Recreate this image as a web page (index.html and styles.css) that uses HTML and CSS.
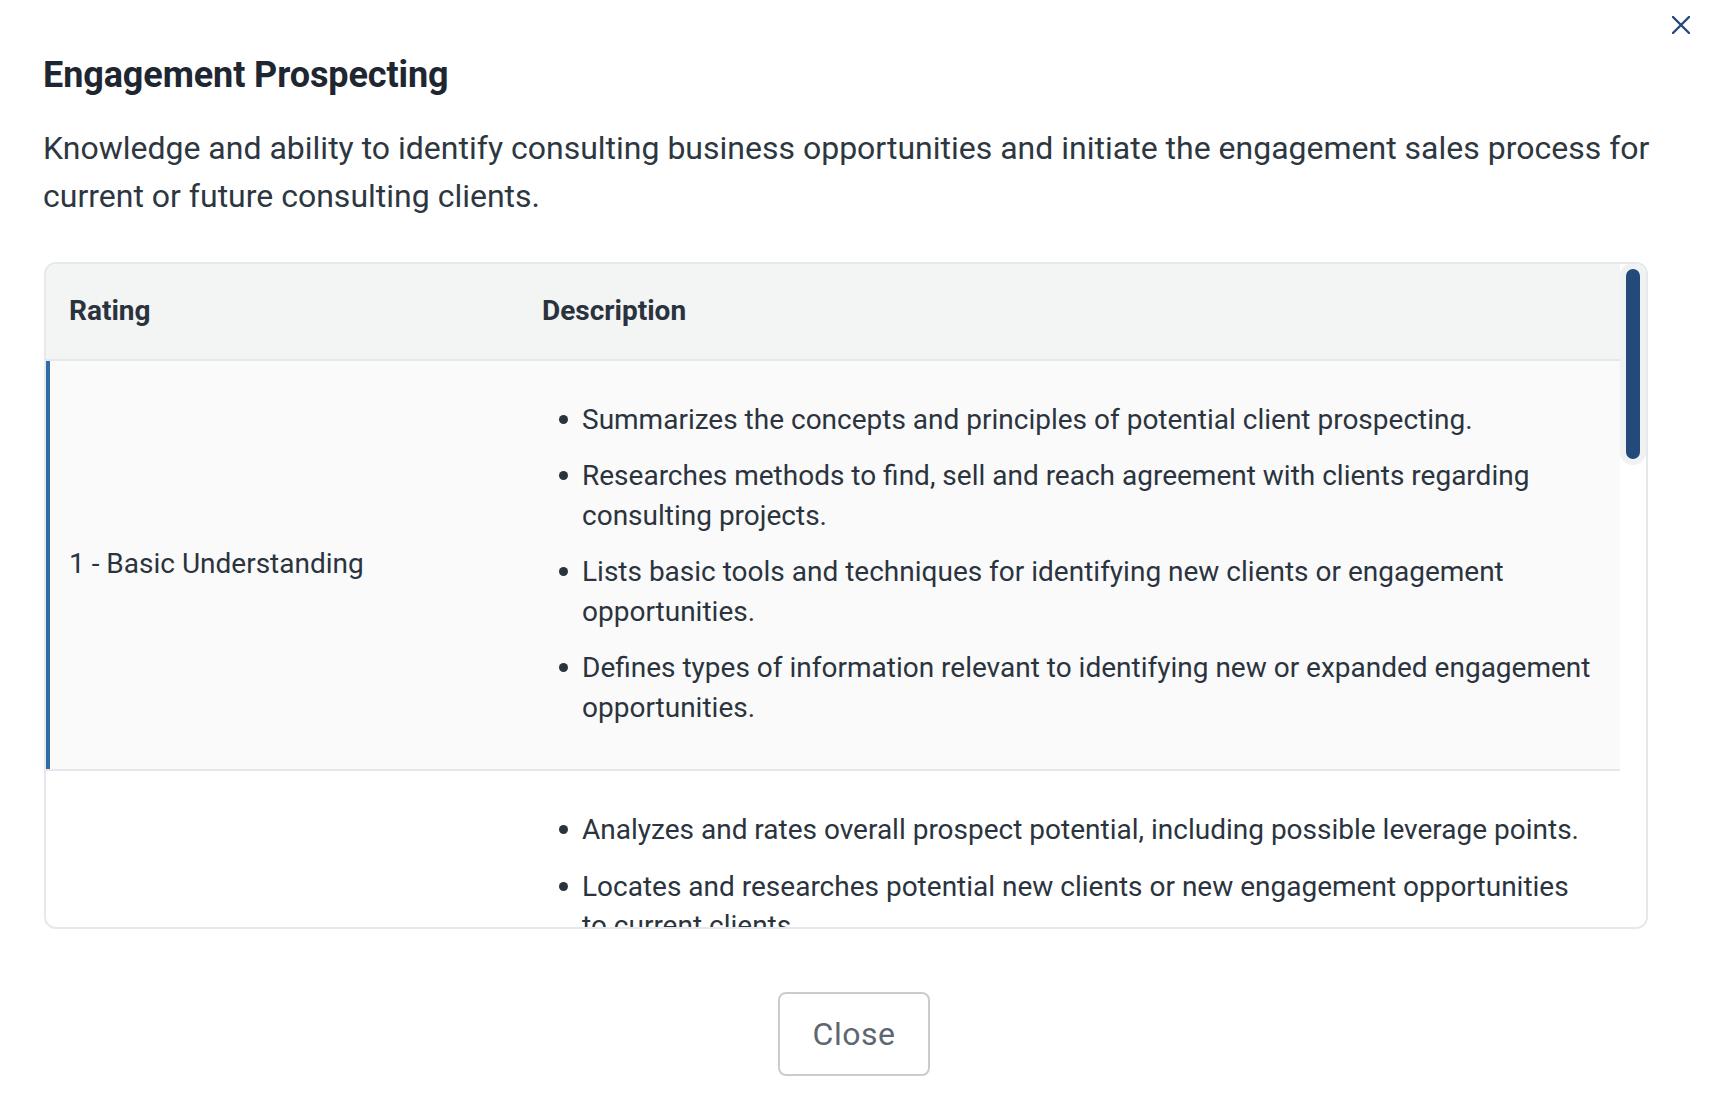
FILE: index.html
```html
<!DOCTYPE html>
<html lang="en">
<head>
<meta charset="utf-8">
<title>Engagement Prospecting</title>
<link rel="stylesheet" href="styles.css">
</head>
<body>
<div class="modal">
  <button class="modal-x" aria-label="Close">
    <svg viewBox="0 0 18 18" width="18" height="18"><path d="M1 1 L17 17 M17 1 L1 17" stroke="#234a7a" stroke-width="2.4" stroke-linecap="round" fill="none"/></svg>
  </button>
  <h1 class="modal-title">Engagement Prospecting</h1>
  <p class="modal-desc">Knowledge and ability to identify consulting business opportunities and initiate the engagement sales process for current or future consulting clients.</p>

  <div class="table-card">
    <div class="table-scroll">
      <table class="rating-table">
        <thead>
          <tr><th class="col-rating">Rating</th><th>Description</th></tr>
        </thead>
        <tbody>
          <tr class="active">
            <td class="col-rating">1 - Basic Understanding</td>
            <td>
              <ul class="bullets">
                <li>Summarizes the concepts and principles of potential client prospecting.</li>
                <li>Researches methods to find, sell and reach agreement with clients regarding consulting projects.</li>
                <li>Lists basic tools and techniques for identifying new clients or engagement opportunities.</li>
                <li>Defines types of information relevant to identifying new or expanded engagement opportunities.</li>
              </ul>
            </td>
          </tr>
          <tr>
            <td class="col-rating">2 - Working Experience</td>
            <td>
              <ul class="bullets">
                <li>Analyzes and rates overall prospect potential, including possible leverage points.</li>
                <li>Locates and researches potential new clients or new engagement opportunities to current clients.</li>
                <li>Identifies key decision makers and influencers within prospective client organizations and their needs.</li>
                <li>Prepares preliminary engagement proposals and presentations with guidance from senior consultants.</li>
              </ul>
            </td>
          </tr>
          <tr>
            <td class="col-rating">3 - Extensive Experience</td>
            <td>
              <ul class="bullets">
                <li>Develops and maintains a pipeline of qualified prospects and engagement opportunities.</li>
                <li>Leads prospecting meetings and builds relationships with potential clients to uncover business needs.</li>
              </ul>
            </td>
          </tr>
        </tbody>
      </table>
    </div>
    <div class="scrollbar" aria-hidden="true">
      <div class="scroll-thumb"></div>
    </div>
  </div>

  <div class="modal-footer">
    <button class="btn-close">Close</button>
  </div>
</div>
</body>
</html>
```

FILE: styles.css
```css
* { box-sizing: border-box; }
html, body { margin: 0; padding: 0; background: #ffffff; }
body {
  font-family: Roboto, "Liberation Sans", Arial, sans-serif;
  color: #2b343e;
  width: 1722px;
  height: 1118px;
  overflow: hidden;
}
.modal {
  position: relative;
  padding: 53px 44px 0 43px;
}
.modal-x {
  position: absolute;
  top: 13px;
  right: 29px;
  width: 24px;
  height: 24px;
  padding: 3px;
  border: 0;
  background: transparent;
  cursor: pointer;
  display: flex;
  align-items: center;
  justify-content: center;
}
.modal-title {
  margin: 0;
  font-size: 36px;
  line-height: 44px;
  font-weight: 700;
  color: #1e2731;
  letter-spacing: -0.1px;
}
.modal-desc {
  margin: 27px 0 0;
  font-size: 32px;
  line-height: 48px;
  color: #2d3741;
}
.table-card {
  margin: 42px 30px 0 1px;
  height: 667px;
  border: 2px solid #e7e8eb;
  border-radius: 12px;
  overflow: hidden;
  display: flex;
}
.table-scroll {
  flex: 1 1 auto;
  min-width: 0;
  overflow: hidden;
}
.scrollbar {
  flex: 0 0 26px;
  background: #ffffff;
}
.scroll-thumb {
  height: 202px;
  margin-top: -1px;
  background: #234a7a;
  border: 6px solid #f0f1f2;
  border-radius: 13px;
}
.rating-table {
  width: 100%;
  border-collapse: collapse;
  font-size: 28px;
  line-height: 39.5px;
}
.rating-table th {
  text-align: left;
  font-weight: 700;
  color: #2a333d;
  background: #f3f4f4;
  padding: 27px 23px 28px;
  border-bottom: 2px solid #e6e7ea;
}
.rating-table .col-rating { width: 473px; }
.rating-table td {
  padding: 39px 23px 42px;
  vertical-align: middle;
  border-bottom: 2px solid #e6e7ea;
  color: #2b343e;
}
.rating-table tr.active td { background: #fafafa; }
.rating-table tr.active td.col-rating { box-shadow: inset 4px 0 0 #326ba6; }
.bullets {
  list-style: none;
  margin: 0;
  padding: 0;
}
.bullets li {
  display: flex;
  align-items: flex-start;
}
.bullets li + li { margin-top: 17px; }
.bullets li::before {
  content: "";
  flex: 0 0 9px;
  height: 9px;
  border-radius: 50%;
  background: #2b343e;
  margin: 15px 14px 0 17px;
}
.modal-footer {
  display: flex;
  justify-content: center;
  margin-right: 30px;
  padding-left: 17px;
  margin-top: 63px;
}
.btn-close {
  font-family: Roboto, "Liberation Sans", Arial, sans-serif;
  font-size: 32px;
  line-height: 38px;
  letter-spacing: 0.5px;
  color: #5e6670;
  background: #ffffff;
  border: 2px solid #c9cdd2;
  border-radius: 8px;
  padding: 21px 33px;
  cursor: pointer;
}
```
